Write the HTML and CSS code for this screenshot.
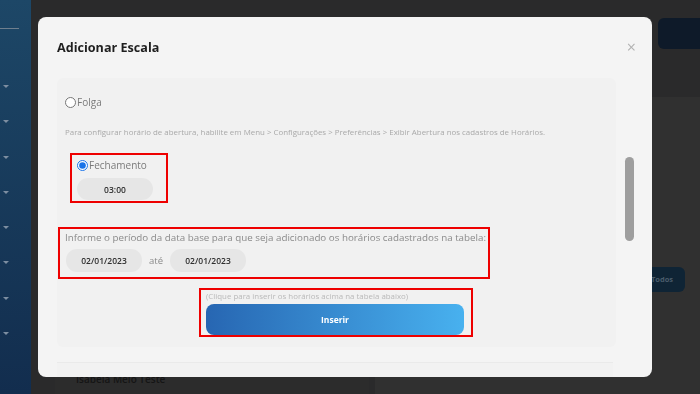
FILE: index.html
```html
<!DOCTYPE html>
<html lang="pt-BR">
<head>
    <meta charset="UTF-8">
    <meta name="viewport" content="width=device-width, initial-scale=1.0">
    <title>Adicionar Escala</title>
    <link rel="stylesheet" href="styles.css">
</head>
<body>
    <div class="app">
        <aside class="sidebar">
            <div class="sidebar-line"></div>
            <ul class="menu">
                <li><span class="caret"></span></li>
                <li><span class="caret"></span></li>
                <li><span class="caret"></span></li>
                <li><span class="caret"></span></li>
                <li><span class="caret"></span></li>
                <li><span class="caret"></span></li>
                <li><span class="caret"></span></li>
                <li><span class="caret"></span></li>
            </ul>
        </aside>
        <main class="main">
            <div class="topbar">
                <button class="top-button"></button>
            </div>
            <div class="cards">
                <section class="card card-left">
                    <div class="card-row">Isabela Melo Teste</div>
                </section>
                <section class="card card-right">
                    <button class="todos-button">Todos</button>
                </section>
            </div>
        </main>
    </div>

    <!-- Modal -->
    <div class="overlay">
        <div class="modal">
            <div class="modal-header">
                <h2 class="modal-title">Adicionar Escala</h2>
                <span class="close">&times;</span>
            </div>
            <div class="modal-body">
                <div class="panel">
                    <label class="radio-row">
                        <input type="radio" name="tipo" class="radio">
                        <span>Folga</span>
                    </label>
                    <p class="hint">Para configurar horário de abertura, habilite em Menu &gt; Configurações &gt; Preferências &gt; Exibir Abertura nos cadastros de Horários.</p>

                    <div class="box box-fechamento">
                        <label class="radio-row">
                            <input type="radio" name="tipo" class="radio" checked>
                            <span>Fechamento</span>
                        </label>
                        <div class="pill pill-time">03:00</div>
                    </div>

                    <div class="box box-periodo">
                        <p class="periodo-label">Informe o período da data base para que seja adicionado os horários cadastrados na tabela:</p>
                        <div class="dates">
                            <div class="pill">02/01/2023</div>
                            <span class="ate">até</span>
                            <div class="pill">02/01/2023</div>
                        </div>
                    </div>

                    <div class="box box-inserir">
                        <p class="caption">(Clique para inserir os horários acima na tabela abaixo)</p>
                        <button class="insert-button">Inserir</button>
                    </div>
                </div>
                <div class="scroll-track">
                    <div class="scroll-thumb"></div>
                </div>
            </div>
            <div class="panel-next"></div>
        </div>
    </div>
</body>
</html>
```

FILE: styles.css
```css
* {
    box-sizing: border-box;
}
body {
    margin: 0;
    height: 100vh;
    overflow: hidden;
    font-family: "Open Sans", Arial, sans-serif;
    background-color: #2b2b2b;
}

/* background page (dimmed) */
.app {
    display: flex;
    height: 100vh;
}
.sidebar {
    width: 31px;
    background: linear-gradient(180deg, #1d4767, #122d4e);
    padding-top: 28px;
}
.sidebar-line {
    width: 19px;
    height: 1px;
    background: #6f7f8e;
}
.menu {
    list-style: none;
    margin: 0;
    padding: 56px 0 0 3px;
}
.menu li {
    height: 35.3px;
}
.caret {
    display: block;
    width: 0;
    height: 0;
    border-left: 3px solid transparent;
    border-right: 3px solid transparent;
    border-top: 3px solid #7d8ea1;
}
.main {
    flex: 1;
    display: flex;
    flex-direction: column;
    background: #2a2a2b;
}
.topbar {
    height: 97px;
    display: flex;
    justify-content: flex-end;
    padding-top: 18px;
}
.top-button {
    width: 50px;
    height: 31px;
    margin-right: -8px;
    border: none;
    border-radius: 6px;
    background: #0e1a29;
}
.cards {
    flex: 1;
    display: flex;
    gap: 6px;
    padding-left: 24px;
}
.card {
    background: #303030;
}
.card-left {
    width: 314px;
    display: flex;
    flex-direction: column;
    justify-content: flex-end;
    background: #2c2c2c;
}
.card-row {
    padding: 0 0 8px 21px;
    font-size: 10px;
    font-weight: 600;
    color: #151515;
}
.card-right {
    flex: 1;
    padding-top: 168px;
}
.todos-button {
    margin-left: 264px;
    height: 25px;
    width: 46px;
    border: none;
    border-radius: 6px;
    background: #0f2435;
    color: #4a5c6b;
    font-family: "Open Sans", Arial, sans-serif;
    font-size: 7.5px;
    font-weight: 700;
    text-align: center;
    padding: 0;
}

/* modal */
.overlay {
    position: fixed;
    inset: 0;
}
.modal {
    position: absolute;
    left: 38px;
    top: 17px;
    width: 614px;
    height: 360px;
    background: #f4f4f4;
    border-radius: 8px;
    overflow: hidden;
    padding: 0 0 0 19px;
}
.modal-header {
    height: 61px;
    display: flex;
    justify-content: space-between;
    align-items: flex-start;
    padding: 22px 16px 0 0;
}
.modal-title {
    margin: 0;
    font-size: 12.6px;
    font-weight: 700;
    color: #1f1f1f;
}
.close {
    font-size: 16px;
    line-height: 1;
    color: #b2b2b2;
    margin-top: 0;
}
.modal-body {
    display: flex;
    gap: 9px;
}
.panel {
    width: 559px;
    height: 269px;
    background: #f1f1f1;
    border-radius: 6px;
    padding: 17px 0 0 8px;
    display: flex;
    flex-direction: column;
    align-items: flex-start;
}
.radio-row {
    display: flex;
    align-items: center;
    gap: 1px;
    font-size: 10px;
    color: #7a7a7a;
}
.radio {
    width: 11px;
    height: 11px;
    margin: 0;
    accent-color: #1a73e8;
}
.hint {
    margin: 18px 0 16px;
    font-size: 7.9px;
    color: #a9a9a9;
}
.box {
    border: 2px solid #ee0000;
}
.box-fechamento {
    margin-left: 5px;
    width: 98px;
    height: 50px;
    padding: 3px 0 0 5px;
}
.pill {
    width: 76px;
    height: 23px;
    border-radius: 11px;
    background: #e6e6e6;
    display: flex;
    align-items: center;
    justify-content: center;
    font-size: 8.5px;
    font-weight: 600;
    color: #2e2e2e;
}
.pill-time {
    margin-top: 6px;
    height: 22px;
}
.box-periodo {
    margin: 24px 0 0 -7px;
    width: 432px;
    height: 52px;
    padding: 2px 0 0 5px;
}
.periodo-label {
    margin: 0;
    font-size: 9.8px;
    color: #8a8a8a;
}
.dates {
    display: flex;
    align-items: center;
    gap: 7px;
    margin-top: 5px;
    padding-left: 1px;
}
.ate {
    font-size: 9.5px;
    color: #8a8a8a;
}
.box-inserir {
    margin: 9px 0 0 134px;
    width: 274px;
    height: 49px;
    padding: 1px 0 0 5px;
}
.caption {
    margin: 0;
    font-size: 7.9px;
    line-height: 11px;
    color: #b9b9b9;
}
.insert-button {
    display: block;
    width: 258px;
    height: 31px;
    margin-top: 2px;
    border: none;
    border-radius: 8px;
    background: linear-gradient(90deg, #2766b2, #48b1ef);
    color: #ffffff;
    font-family: "Open Sans", Arial, sans-serif;
    font-size: 8.5px;
    font-weight: 700;
}
.scroll-track {
    width: 9px;
    height: 269px;
    padding-top: 79px;
}
.scroll-thumb {
    width: 9px;
    height: 84px;
    border-radius: 5px;
    background: #9e9e9e;
}
.panel-next {
    margin-top: 15px;
    width: 556px;
    height: 40px;
    border-top: 1px solid #eaeaea;
    background: #f2f2f2;
}
```
